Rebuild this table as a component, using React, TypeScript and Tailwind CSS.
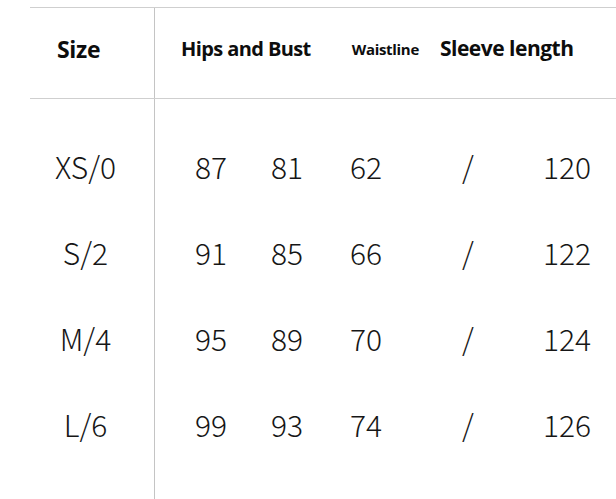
import React from "react";

const rows = [
  { size: "XS/0", a: "87", b: "81", c: "62", d: "/", e: "120" },
  { size: "S/2", a: "91", b: "85", c: "66", d: "/", e: "122" },
  { size: "M/4", a: "95", b: "89", c: "70", d: "/", e: "124" },
  { size: "L/6", a: "99", b: "93", c: "74", d: "/", e: "126" },
];

const dataFont = { fontFamily: '"Noto Sans CJK SC", "Noto Sans", sans-serif' };
const headFont = { fontFamily: '"Open Sans", "Noto Sans", sans-serif' };

export default function App() {
  return (
    <div className="w-[616px] h-[499px] bg-white overflow-hidden">
      <div className="ml-[30px] mt-[7px] h-[492px] border-t border-[#cfcfcf] flex flex-col">
        {/* header */}
        <div className="flex h-[91px] border-b border-[#cfcfcf] shrink-0" style={headFont}>
          <div className="w-[125px] border-r border-[#c4c4c4] flex items-center pl-[27px] pb-[8px]">
            <span className="text-[23px] font-bold text-[#0d0d0d] tracking-[-0.3px]">Size</span>
          </div>
          <div className="flex-1 flex items-center pl-[26px] pb-[8px] text-[#0d0d0d] font-bold whitespace-nowrap">
            <span className="text-[20px] tracking-[-0.6px]">Hips and Bust</span>
            <span className="ml-[41px] text-[15px] tracking-[-0.3px] pt-[1px]">Waistline</span>
            <span className="ml-[21px] text-[21px] tracking-[-0.5px]">Sleeve length</span>
          </div>
        </div>
        {/* body */}
        <div className="flex flex-1" style={dataFont}>
          <div className="w-[125px] border-r border-[#c4c4c4] pt-[24px] pr-[13px] font-light text-[30px] text-[#161616]">
            {rows.map((r) => (
              <div key={r.size} className="h-[86px] flex items-center justify-center">
                {r.size}
              </div>
            ))}
          </div>
          <div className="flex-1 pt-[24px] font-light text-[30px] text-[#161616]">
            {rows.map((r) => (
              <div key={r.size} className="h-[86px] flex items-center pl-[26px]">
                <span className="w-[60px] text-center">{r.a}</span>
                <span className="w-[60px] text-center ml-[16px]">{r.b}</span>
                <span className="w-[60px] text-center ml-[19px]">{r.c}</span>
                <span className="w-[60px] text-center ml-[42px]">{r.d}</span>
                <span className="w-[60px] text-center ml-[39px]">{r.e}</span>
              </div>
            ))}
          </div>
        </div>
      </div>
    </div>
  );
}
